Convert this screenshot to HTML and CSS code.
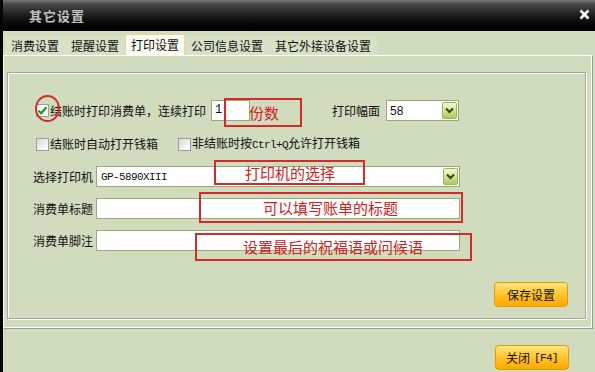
FILE: index.html
```html
<!DOCTYPE html>
<html lang="zh-CN">
<head>
    <meta charset="UTF-8">
    <title>其它设置</title>
    <link rel="stylesheet" href="styles.css">
</head>
<body>
    <div class="window">
        <div class="titlebar">
            <span class="title">其它设置</span>
            <svg class="close-x" width="11" height="11" viewBox="0 0 11 11">
                <path d="M1.5 1.5 L9.5 9.5 M9.5 1.5 L1.5 9.5" stroke="#fff" stroke-width="2.6" fill="none"/>
            </svg>
        </div>

        <div class="tabs">
            <span class="tab">消费设置</span>
            <span class="tab">提醒设置</span>
            <span class="tab active">打印设置</span>
            <span class="tab">公司信息设置</span>
            <span class="tab last">其它外接设备设置</span>
        </div>

        <div class="panel">
            <div class="group">
                <div class="row row-first">
                    <span class="check checked">
                        <svg width="11" height="11" viewBox="0 0 11 11">
                            <path d="M1.5 5.5 L4.2 8.3 L9.5 2.2" stroke="#1f9a1f" stroke-width="2.2" fill="none"/>
                        </svg>
                    </span>
                    <span>结账时打印消费单，连续打印</span>
                    <span class="field copies">1</span>
                    <span class="label-width">打印幅面</span>
                    <span class="select width-select">
                        <span class="select-text sans">58</span>
                        <span class="arrow"><svg width="9" height="7" viewBox="0 0 9 7"><path d="M1 1.5 L4.5 5 L8 1.5" stroke="#2d4a12" stroke-width="2" fill="none"/></svg></span>
                    </span>
                </div>

                <div class="row row-checks">
                    <span class="check"></span>
                    <span>结账时自动打开钱箱</span>
                    <span class="check second"></span>
                    <span>非结账时按<span class="mono">Ctrl+Q</span>允许打开钱箱</span>
                </div>

                <div class="row row-field row-printer">
                    <span class="label">选择打印机</span>
                    <span class="select wide">
                        <span class="select-text mono">GP-5890XIII</span>
                        <span class="arrow"><svg width="9" height="7" viewBox="0 0 9 7"><path d="M1 1.5 L4.5 5 L8 1.5" stroke="#2d4a12" stroke-width="2" fill="none"/></svg></span>
                    </span>
                </div>

                <div class="row row-field">
                    <span class="label">消费单标题</span>
                    <span class="field wide"></span>
                </div>

                <div class="row row-field">
                    <span class="label">消费单脚注</span>
                    <span class="field wide"></span>
                </div>

                <div class="save-row">
                    <span class="btn">保存设置</span>
                </div>
            </div>
        </div>

        <div class="footer">
            <span class="btn">关闭 <span class="mono">[F4]</span></span>
        </div>

        <!-- red annotations drawn over the screenshot -->
        <span class="mark-circle"></span>
        <span class="note note-copies">份数</span>
        <span class="note note-printer">打印机的选择</span>
        <span class="note note-title">可以填写账单的标题</span>
        <span class="note note-footer">设置最后的祝福语或问候语</span>
    </div>
</body>
</html>
```

FILE: styles.css
```css
body {
    margin: 0;
    background: #d1dbbd;
    font-family: "Noto Sans CJK SC", "Noto Sans", sans-serif;
    font-size: 12px;
    line-height: 14px;
    color: #111;
}
.window {
    position: relative;
    width: 595px;
    height: 372px;
    box-sizing: border-box;
    border-left: 3px solid #050505;
    background: #d1dbbd;
    overflow: hidden;
}
.titlebar {
    height: 31px;
    display: flex;
    align-items: center;
    justify-content: space-between;
    padding: 0 5px 0 26px;
    background: linear-gradient(#7a7a7a 0, #4a4a4a 12%, #1c1c1c 50%, #020202 85%, #000 100%);
}
.title {
    color: #c2c2c2;
    font-weight: bold;
    font-size: 13px;
    letter-spacing: 1px;
}
.close-x {
    margin-top: -2px;
}
.tabs {
    height: 24px;
    display: flex;
    align-items: flex-end;
    padding-left: 2px;
}
.tab {
    height: 19px;
    padding: 0 6px;
    line-height: 19px;
    background: #d7e1c5;
}
.tab.last {
    border-top-right-radius: 4px;
}
.tab.active {
    height: 20px;
    line-height: 20px;
    background: #f9fbf0;
    border: 1px solid #f1d68a;
    border-bottom: none;
    padding: 0 5px;
    border-radius: 2px 2px 0 0;
}
.panel {
    height: 274px;
    margin-right: 2px;
    box-sizing: border-box;
    border: 1px solid #fff;
    border-right-color: #9a9a9a;
    border-bottom-color: #9a9a9a;
    box-shadow: inset -1px -1px 0 #fff;
    padding: 16px 0 0 3px;
}
.group {
    width: 579px;
    height: 247px;
    box-sizing: border-box;
    border: 1px solid #a3a79b;
    box-shadow: 1px 1px 0 #fff, inset 1px 1px 0 #fff;
    padding: 0 0 0 25px;
}
.row {
    display: flex;
    align-items: center;
    white-space: nowrap;
}
.row-first {
    height: 21px;
    margin-top: 27px;
    padding-left: 3px;
}
.row-checks {
    height: 14px;
    margin-top: 16px;
    padding-left: 3px;
}
.row-field {
    height: 21px;
    margin-top: 11px;
}
.row-printer {
    margin-top: 15px;
}
.check {
    width: 13px;
    height: 13px;
    box-sizing: border-box;
    border: 1px solid #9c9c9c;
    background: linear-gradient(135deg, #d8d8d8, #f6f6f6 70%, #fff);
    margin-right: 1px;
    display: flex;
    align-items: center;
    justify-content: center;
}
.check.checked {
    background: #fff;
}
.check.second {
    margin-left: 20px;
}
.field {
    display: block;
    height: 21px;
    box-sizing: border-box;
    border: 1px solid #98ab74;
    background: #fff;
}
.copies {
    width: 39px;
    margin-left: 5px;
    padding-left: 3px;
    font-family: "Liberation Mono", monospace;
    font-size: 12px;
    line-height: 18px;
}
.label-width {
    margin-left: 82px;
}
.label {
    width: 60px;
}
.select {
    height: 21px;
    box-sizing: border-box;
    border: 1px solid #98ab74;
    background: #fff;
    display: flex;
    align-items: center;
    justify-content: space-between;
    padding: 0 1px 0 4px;
}
.width-select {
    width: 73px;
    margin-left: 6px;
    padding-left: 3px;
}
.wide {
    width: 364px;
    margin-left: 3px;
}
.select-text.sans {
    font-family: "Liberation Sans", sans-serif;
    font-size: 12px;
}
.mono {
    font-family: "Liberation Mono", monospace;
    font-size: 11px;
    letter-spacing: -0.6px;
}
.arrow {
    width: 15px;
    height: 17px;
    box-sizing: border-box;
    border: 1px solid #9bb65a;
    border-radius: 2px;
    background: linear-gradient(#f4f8d8, #cfe496 50%, #a9cb5c);
    display: flex;
    align-items: center;
    justify-content: center;
}
.save-row {
    display: flex;
    justify-content: flex-end;
    margin: 31px 17px 0 0;
}
.btn {
    width: 74px;
    height: 25px;
    box-sizing: border-box;
    border: 1px solid #e49a08;
    border-radius: 4px;
    background: linear-gradient(#ffe680 0, #ffc733 45%, #ffa800 100%);
    display: flex;
    align-items: center;
    justify-content: center;
    gap: 4px;
}
.footer {
    display: flex;
    justify-content: flex-end;
    padding: 16px 26px 0 0;
}
.mark-circle {
    position: absolute;
    left: 32px;
    top: 95px;
    width: 25px;
    height: 27px;
    box-sizing: border-box;
    border: 2px solid #d42a2a;
    border-radius: 50%;
}
.note {
    position: absolute;
    box-sizing: border-box;
    border: 2px solid #d42a2a;
    color: #d42020;
    font-size: 15px;
    line-height: 18px;
    display: flex;
    align-items: center;
    white-space: nowrap;
}
.note-copies {
    left: 221px;
    top: 98px;
    width: 78px;
    height: 29px;
    padding-left: 23px;
}
.note-printer {
    left: 211px;
    top: 160px;
    width: 151px;
    height: 25px;
    padding-left: 29px;
}
.note-title {
    left: 196px;
    top: 192px;
    width: 264px;
    height: 31px;
    padding-left: 62px;
}
.note-footer {
    left: 192px;
    top: 233px;
    width: 277px;
    height: 28px;
    padding-left: 46px;
}
```
